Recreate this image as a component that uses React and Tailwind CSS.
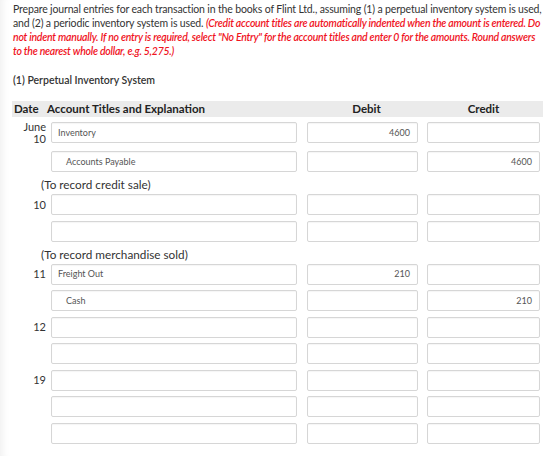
const entries = [
  {
    date: ["June", "10"],
    rows: [
      { account: "Inventory", debit: "4600", credit: "" },
      { account: "Accounts Payable", debit: "", credit: "4600", indent: true },
    ],
    note: "(To record credit sale)",
  },
  {
    date: ["10"],
    rows: [
      { account: "", debit: "", credit: "" },
      { account: "", debit: "", credit: "" },
    ],
    note: "(To record merchandise sold)",
  },
  {
    date: ["11"],
    rows: [
      { account: "Freight Out", debit: "210", credit: "" },
      { account: "Cash", debit: "", credit: "210", indent: true },
    ],
  },
  {
    date: ["12"],
    rows: [
      { account: "", debit: "", credit: "" },
      { account: "", debit: "", credit: "" },
    ],
  },
  {
    date: ["19"],
    rows: [
      { account: "", debit: "", credit: "" },
      { account: "", debit: "", credit: "" },
      { account: "", debit: "", credit: "" },
    ],
  },
];

const Field = ({ value, className = "" }) => {
  return (
    <div
      className={`h-[21px] flex items-center border border-[#d6d6d6] rounded-[2px] bg-white text-[9px] text-[#555] shadow-[inset_0_1px_1px_rgba(0,0,0,0.04)] ${className}`}
    >
      {value}
    </div>
  );
};

const EntryRow = ({ date, row, tall }) => {
  return (
    <div className={`flex items-start ${tall ? "mb-[8px]" : "mb-[5.5px]"}`}>
      <div className="w-[33px] h-[21px] flex flex-col items-end justify-center leading-[12px] text-[11px] text-[#333]">
        {date && date.map((d) => <span key={d}>{d}</span>)}
      </div>
      <Field
        value={row.account}
        className={`ml-[5px] w-[246px] ${row.indent ? "pl-[14px]" : "pl-[6px]"}`}
      />
      <Field value={row.debit} className="ml-[10px] w-[111px] justify-end pr-[7px]" />
      <Field value={row.credit} className="ml-[9px] w-[113px] justify-end pr-[7px]" />
    </div>
  );
};

const App = () => {
  return (
    <div
      className="w-[560px] h-[456px] overflow-hidden bg-white pl-[13px] pt-[2px] shadow-[inset_9px_0_8px_-7px_rgba(0,0,0,0.07)]"
      style={{ fontFamily: "Lato, 'Open Sans', sans-serif" }}
    >
      {/* instructions */}
      <p className="text-[10.5px] leading-[14px] tracking-[-0.15px] text-[#333] w-[530px]">
        Prepare journal entries for each transaction in the books of Flint Ltd., assuming (1) a
        perpetual inventory system is used, and (2) a periodic inventory system is used.{" "}
        <span className="italic font-semibold tracking-[-0.24px] text-[#f0141e]">
          (Credit account titles are automatically indented when the amount is entered. Do not
          indent manually. If no entry is required, select "No Entry" for the account titles and
          enter 0 for the amounts. Round answers to the nearest whole dollar, e.g. 5,275.)
        </span>
      </p>

      <h3 className="mt-[15px] text-[10.5px] leading-[14px] font-semibold text-[#333]">
        (1) Perpetual Inventory System
      </h3>

      {/* journal table */}
      <div className="mt-[14px] -ml-[1px] w-[531px]">
        <div className="flex items-center h-[16px] bg-[#ebebeb] text-[11.5px] font-bold text-[#222]">
          <span className="pl-[2px] w-[35px]">Date</span>
          <span className="w-[259px]">Account Titles and Explanation</span>
          <span className="w-[121px] text-center">Debit</span>
          <span className="w-[113px] text-center">Credit</span>
        </div>

        <div className="mt-[5px] pl-[1px]">
          {entries.map((entry, i) => (
            <div key={i}>
              {entry.rows.map((row, j) => (
                <EntryRow
                  key={j}
                  row={row}
                  date={j === 0 ? entry.date : null}
                  tall={j === 0 && entry.date.length > 1}
                />
              ))}
              {entry.note && (
                <div className="-mt-[1px] mb-[0.5px] h-[17px] pl-[28px] flex items-center text-[11.75px] text-[#333]">
                  {entry.note}
                </div>
              )}
            </div>
          ))}
        </div>
      </div>
    </div>
  );
};

export default App;
